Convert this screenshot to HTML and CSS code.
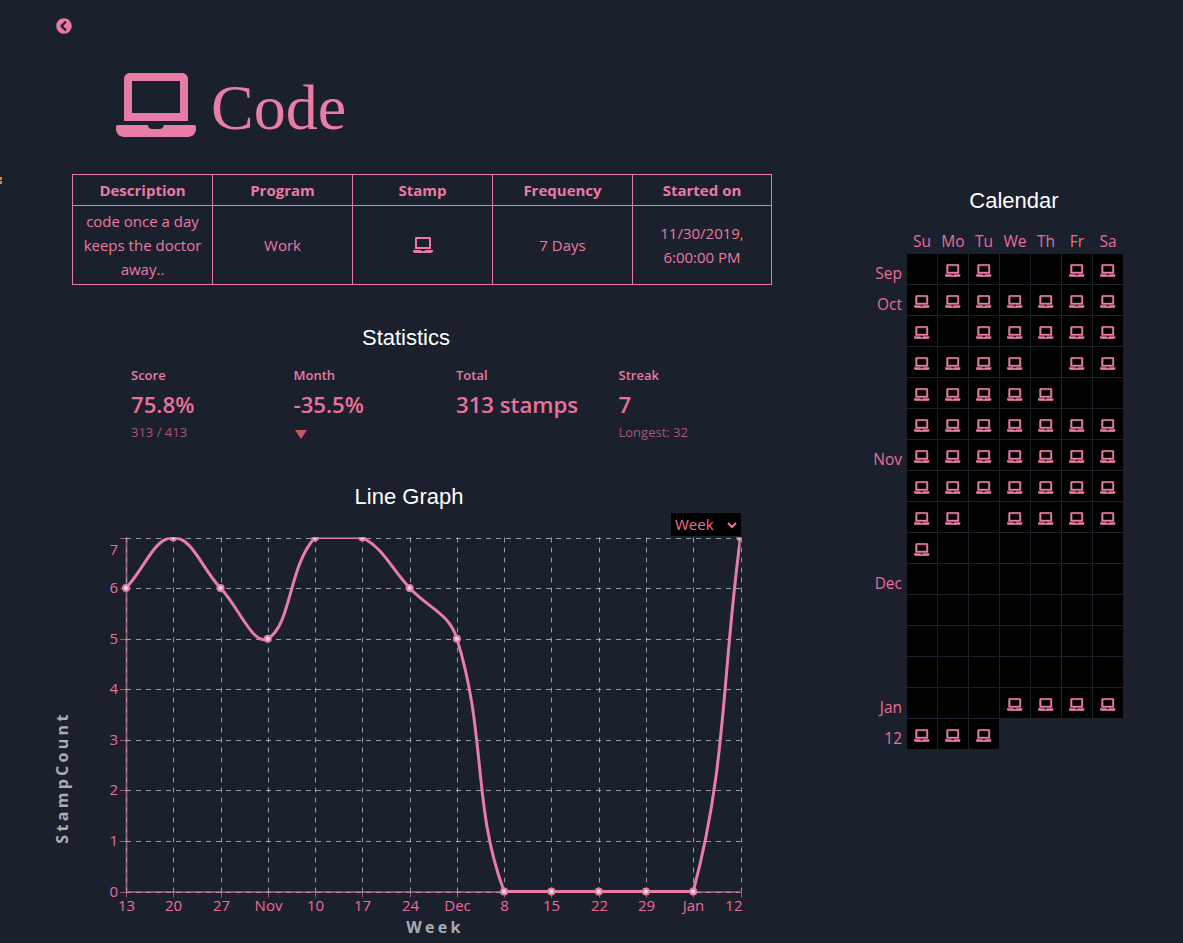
FILE: index.html
```html
<!DOCTYPE html>
<html lang="en">
<head>
<meta charset="utf-8">
<title>Code</title>
<link rel="stylesheet" href="styles.css">
</head>
<body>
<svg class="defs" width="0" height="0" aria-hidden="true">
  <symbol id="laptop" viewBox="0 0 640 512"><path d="M624 416H381.54c-.74 19.81-14.71 32-32.74 32H288c-18.69 0-33.02-17.47-32.77-32H16c-8.8 0-16 7.2-16 16v16c0 35.2 28.8 64 64 64h512c35.2 0 64-28.8 64-64v-16c0-8.8-7.2-16-16-16zM576 48c0-26.4-21.6-48-48-48H112C85.6 0 64 21.6 64 48v336h512V48zm-64 272H128V64h384v256z"/></symbol>
</svg>
<span class="edge-mark"></span>
<div class="page">
  <main class="main">
    <svg class="back" viewBox="0 0 512 512"><path d="M256 504C119 504 8 393 8 256S119 8 256 8s248 111 248 248-111 248-248 248zM142.1 273l135.5 135.5c9.4 9.4 24.6 9.4 33.9 0l17-17c9.4-9.4 9.4-24.6 0-33.9L226.9 256l101.6-101.6c9.4-9.4 9.4-24.6 0-33.9l-17-17c-9.4-9.4-24.6-9.4-33.9 0L142.1 239c-9.4 9.4-9.4 24.6 0 34z"/></svg>
    <header class="hero">
      <svg class="hero-icon"><use href="#laptop"/></svg>
      <h1 class="hero-title">Code</h1>
    </header>
    <table class="info">
      <thead>
        <tr><th>Description</th><th>Program</th><th>Stamp</th><th>Frequency</th><th class="last-col">Started on</th></tr>
      </thead>
      <tbody>
        <tr>
          <td>code once a day keeps the doctor away..</td>
          <td>Work</td>
          <td><svg class="stamp-icon"><use href="#laptop"/></svg></td>
          <td>7 Days</td>
          <td>11/30/2019, 6:00:00 PM</td>
        </tr>
      </tbody>
    </table>
    <h2 class="section-title stats-title">Statistics</h2>
    <section class="stats">
      <div class="stat"><div class="stat-label">Score</div><div class="stat-value">75.8%</div><div class="stat-help">313 / 413</div></div>
      <div class="stat"><div class="stat-label">Month</div><div class="stat-value">-35.5%</div><div class="stat-help"><span class="arrow-down"></span></div></div>
      <div class="stat"><div class="stat-label">Total</div><div class="stat-value">313 stamps</div></div>
      <div class="stat"><div class="stat-label">Streak</div><div class="stat-value">7</div><div class="stat-help">Longest: 32</div></div>
    </section>
    <h2 class="section-title graph-title">Line Graph</h2>
    <div class="range">
      <div class="select">Week<svg class="select-arrow" viewBox="0 0 10 6"><path d="M1 1l4 4 4-4"/></svg></div>
    </div>
    <svg class="chart" id="chart" width="720" height="407" viewBox="0 0 720 407"></svg>
  </main>
  <aside class="side">
    <h2 class="section-title calendar-title">Calendar</h2>
    <div class="calendar" id="calendar"></div>
  </aside>
</div>
<script src="app.js"></script>
</body>
</html>
```
FILE: styles.css
```css
* { box-sizing: border-box; }
html, body { margin: 0; height: 100%; }
body {
  background: #1a202c;
  color: #ea7aa3;
  font-family: "Open Sans", "Noto Sans", sans-serif;
  font-size: 15px;
  overflow: hidden;
  position: relative;
}
.defs { position: absolute; }
.edge-mark {
  position: absolute;
  left: 0;
  top: 177px;
  width: 2px;
  height: 7px;
  background: linear-gradient(#e8862a 0 3px, transparent 3px 4px, #e8862a 4px 7px);
}
.page { display: flex; height: 943px; overflow: hidden; }
.main { width: 860px; flex: none; padding: 18px 0 0 40px; }
.back { display: block; width: 16px; height: 16px; margin-left: 16px; fill: #ea7aa3; }
.hero { display: flex; align-items: center; margin: 39px 0 37px 76px; height: 64px; }
.hero-icon { width: 80px; height: 64px; fill: #e87ea6; flex: none; }
.hero-title {
  margin: 5px 0 0 15px;
  font: 400 64px/64px "Liberation Serif", serif;
  color: #e87ea6;
}
.info {
  margin-left: 32px;
  width: 700px;
  border-collapse: collapse;
  table-layout: fixed;
  text-align: center;
}
.info th, .info td { border: 1px solid #ea7aa3; line-height: 24px; vertical-align: middle; }
.info th { width: 140px; font-weight: 700; height: 31px; padding: 0 8px; }
.info th.last-col { width: 139px; }
.info td { height: 79px; padding: 2px 8px 3px; }
.stamp-icon { display: inline-block; vertical-align: middle; width: 20px; height: 16px; margin-bottom: 2px; fill: #ea7aa3; }
.section-title { margin: 0; color: #fff; font: 400 22px/24px "Liberation Sans", Arial, sans-serif; text-align: center; }
.stats-title { width: 700px; margin: 41px 0 0 16px; }
.stats { display: grid; grid-template-columns: repeat(4, 162.5px); margin: 15px 0 0 91px; }
.stat { height: 72px; }
.stat-label { font-size: 13px; font-weight: 600; line-height: 20px; }
.stat-value { font-size: 22.2px; font-weight: 600; line-height: 32px; margin-top: 4px; color: #ec7099; }
.stat-help { font-size: 13px; line-height: 22px; color: #a5587f; }
.arrow-down {
  display: block;
  width: 0;
  height: 0;
  margin: 9px 0 0 1px;
  border-left: 6px solid transparent;
  border-right: 6px solid transparent;
  border-top: 9px solid #c85a5f;
}
.graph-title { width: 700px; margin: 48px 0 0 19px; }
.range { display: flex; justify-content: flex-end; width: 701px; margin-top: 4px; }
.select {
  width: 70px;
  height: 23px;
  background: #000;
  color: #ec6c9b;
  display: flex;
  align-items: center;
  justify-content: space-between;
  padding: 0 4px;
  line-height: 23px;
}
.select-arrow { width: 10px; height: 6px; fill: none; stroke: #ea7aa3; stroke-width: 2; }
.chart { display: block; }
.chart text { fill: #ec6c9b; font-family: "Open Sans", "Noto Sans", sans-serif; font-size: 15px; }
.chart .axis-title { fill: #a9acb3; font-weight: 700; font-size: 16px; letter-spacing: 3.3px; }
.side { width: 263px; flex: none; padding-top: 189px; }
.calendar-title { padding-left: 45px; }
.calendar {
  display: grid;
  grid-template-columns: 46px repeat(7, 30px);
  grid-auto-rows: 30px;
  column-gap: 1px;
  row-gap: 1px;
  margin-top: 10px;
  font-size: 15.5px;
}
.day { text-align: center; line-height: 24px; height: 24px; align-self: end; color: #ec6c9b; }
.month { text-align: right; padding-right: 5px; margin-right: -1px; line-height: 22px; align-self: end; color: #ec6c9b; }
.cell { background: #000; display: flex; align-items: center; justify-content: center; }
.cell svg { width: 15.5px; height: 13px; margin-top: 2px; fill: #e87ea6; stroke: #e87ea6; stroke-width: 18; }
```
FILE: app.js
```js
(function () {
  /* ---- calendar ---- */
  var days = ['Su', 'Mo', 'Tu', 'We', 'Th', 'Fr', 'Sa'];
  var rows = [
    ['Sep', '0110011'], ['Oct', '1111111'], ['', '1011111'], ['', '1111011'],
    ['', '1111100'], ['', '1111111'], ['Nov', '1111111'], ['', '1111111'],
    ['', '1101111'], ['', '1000000'], ['Dec', '0000000'], ['', '0000000'],
    ['', '0000000'], ['', '0000000'], ['Jan', '0001111'], ['12', '111']
  ];
  var html = '<div></div>';
  days.forEach(function (d) { html += '<div class="day">' + d + '</div>'; });
  rows.forEach(function (r) {
    html += '<div class="month">' + r[0] + '</div>';
    r[1].split('').forEach(function (c) {
      html += '<div class="cell">' + (c === '1' ? '<svg><use href="#laptop"/></svg>' : '') + '</div>';
    });
    for (var i = r[1].length; i < 7; i++) html += '<div></div>';
  });
  document.getElementById('calendar').innerHTML = html;

  /* ---- line graph ---- */
  var originX = 40, originY = 536;
  var left = 126 - originX, right = 740.5 - originX, top = 537.5 - originY, bottom = 891.5 - originY;
  var labels = ['13', '20', '27', 'Nov', '10', '17', '24', 'Dec', '8', '15', '22', '29', 'Jan', '12'];
  var data = [6, 7, 6, 5, 7, 7, 6, 5, 0, 0, 0, 0, 0, 7];
  var stepX = (right - left) / 13, stepY = (bottom - top) / 7;
  var pts = data.map(function (v, i) { return { x: left + i * stepX, y: bottom - v * stepY }; });
  var out = '<defs><clipPath id="plot"><rect x="' + (left - 5) + '" y="' + top + '" width="' + (right - left + 5) + '" height="' + (bottom - top + 5) + '"/></clipPath></defs>';
  var gridColor = 'rgba(255,255,255,0.55)', tickColor = 'rgba(232,126,166,0.6)';

  function line(x1, y1, x2, y2, color, dash, width) {
    return '<line x1="' + x1 + '" y1="' + y1 + '" x2="' + x2 + '" y2="' + y2 + '" stroke="' + color + '" stroke-width="' + (width || 1) + '"' + (dash ? ' stroke-dasharray="5 5"' : '') + '/>';
  }
  for (var v = 0; v <= 7; v++) {
    var y = Math.round(bottom - v * stepY) + 0.5;
    var labelY = v === 7 ? y + 16 : y + 4.5;
    out += line(left - 6, y, left, y, tickColor);
    out += line(left, y, right, y, gridColor, true);
    out += '<text x="' + (left - 8) + '" y="' + labelY + '" text-anchor="end">' + v + '</text>';
  }
  labels.forEach(function (l, i) {
    var x = Math.round(left + i * stepX) + 0.5;
    var last = i === labels.length - 1;
    out += line(x, bottom, x, bottom + 6, tickColor);
    out += line(x, top, x, bottom, gridColor, true);
    out += '<text x="' + (last ? x + 1 : x) + '" y="' + (bottom + 19) + '" text-anchor="' + (last ? 'end' : 'middle') + '">' + l + '</text>';
  });
  out += line(left + 0.5, top, left + 0.5, bottom, 'rgba(232,126,166,0.55)', false, 2);
  out += line(left, bottom + 0.5, right, bottom + 0.5, 'rgba(232,126,166,0.55)', false, 2);

  var t = 0.4;
  var cps = pts.map(function (p, i) {
    var a = pts[i - 1] || p, b = pts[i + 1] || p;
    var d01 = Math.hypot(p.x - a.x, p.y - a.y), d12 = Math.hypot(b.x - p.x, b.y - p.y);
    var fa = t * (d01 / ((d01 + d12) || 1)), fb = t * (d12 / ((d01 + d12) || 1));
    function capY(y) { return Math.min(bottom, Math.max(top, y)); }
    return {
      px: p.x - fa * (b.x - a.x), py: capY(p.y - fa * (b.y - a.y)),
      nx: p.x + fb * (b.x - a.x), ny: capY(p.y + fb * (b.y - a.y))
    };
  });
  var d = 'M' + pts[0].x + ' ' + pts[0].y;
  for (var i = 1; i < pts.length; i++) {
    d += 'C' + cps[i - 1].nx + ' ' + cps[i - 1].ny + ' ' + cps[i].px + ' ' + cps[i].py + ' ' + pts[i].x + ' ' + pts[i].y;
  }
  out += '<g clip-path="url(#plot)"><path d="' + d + '" fill="none" stroke="#e87ea6" stroke-width="3"/>';
  pts.forEach(function (p) {
    out += '<circle cx="' + p.x + '" cy="' + p.y + '" r="3" fill="#e8e0e4" stroke="#e87ea6" stroke-width="2"/>';
  });
  out += '</g>';
  out += '<text class="axis-title" x="' + (435 - originX) + '" y="' + (933 - originY) + '" text-anchor="middle">Week</text>';
  out += '<text class="axis-title" transform="translate(' + (68 - originX) + ' ' + (777.5 - originY) + ') rotate(-90)" text-anchor="middle">StampCount</text>';
  document.getElementById('chart').innerHTML = out;
})();
```
